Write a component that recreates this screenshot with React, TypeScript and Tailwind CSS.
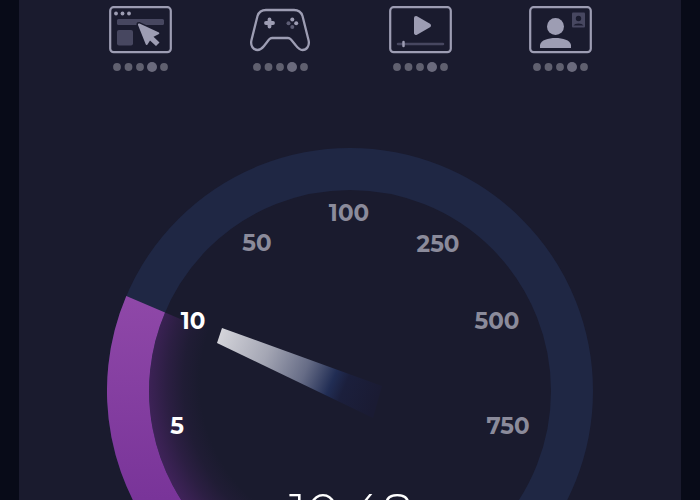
import type { ReactNode } from 'react';

const labels = [
  { text: '5', x: 70, y: 278, active: true },
  { text: '10', x: 86, y: 173, active: true },
  { text: '50', x: 150, y: 95, active: false },
  { text: '100', x: 242, y: 65, active: false },
  { text: '250', x: 331, y: 96, active: false },
  { text: '500', x: 390, y: 173, active: false },
  { text: '750', x: 401, y: 278, active: false },
];

function Frame() {
  return <rect x="2.2" y="2.2" width="60.6" height="45" rx="3.5" fill="none" stroke="#9d9db3" strokeWidth="2.2" />;
}

const activities: { name: string; icon: ReactNode }[] = [
  {
    name: 'Browsing',
    icon: (
      <>
        <Frame />
        <g fill="#9d9db3">
          <circle cx="8" cy="8.5" r="1.9" />
          <circle cx="14.5" cy="8.5" r="1.9" />
          <circle cx="21" cy="8.5" r="1.9" />
        </g>
        <rect x="9" y="14" width="47" height="6" rx="1.5" fill="#474760" />
        <rect x="9" y="25" width="16" height="15.5" rx="2" fill="#474760" />
        <path
          d="M31.5 18.5 L51 27.5 Q52 28.5 50.5 29.3 L45.5 31.8 L51.5 37.5 L48 41 L42 35.5 L39.5 39.5 Q38.3 40.7 37.7 39.3 L30 20 Q29.5 18 31.5 18.5 Z"
          fill="#9d9db3"
          stroke="#1a1b2e"
          strokeWidth="3"
          strokeLinejoin="round"
          paintOrder="stroke"
        />
      </>
    ),
  },
  {
    name: 'Gaming',
    icon: (
      <>
        <path
          d="M18 5 H46 Q52.5 5 54.5 11 L60.5 35 C62 41 58.5 45 54.5 45 C51 45 49 42 47.5 40 L43 34.5 Q41.5 33 40 33 H24 Q22.5 33 21 34.5 L16 41 C14 43.5 12 45 9.5 45 C5.5 45 2 41 3.5 35 L9.5 11 Q11.5 5 18 5 Z"
          fill="none"
          stroke="#9d9db3"
          strokeWidth="2.3"
        />
        <path d="M21.5 14.5 V21.5 M18 18 H25" stroke="#9d9db3" strokeWidth="3.8" strokeLinecap="round" />
        <circle cx="44.3" cy="14.5" r="2" fill="#9d9db3" />
        <circle cx="48.2" cy="18.3" r="2" fill="#9d9db3" />
        <circle cx="40.5" cy="18.3" r="2" fill="#5d5d75" />
        <circle cx="44.3" cy="22" r="2" fill="#5d5d75" />
      </>
    ),
  },
  {
    name: 'Streaming',
    icon: (
      <>
        <Frame />
        <path
          d="M28 13 L41 20.5 L28 28 Z"
          fill="#9d9db3"
          stroke="#9d9db3"
          strokeWidth="4"
          strokeLinejoin="round"
        />
        <path d="M10 39 H55" stroke="#474760" strokeWidth="2.5" strokeLinecap="round" />
        <path d="M15.5 37 V41" stroke="#9d9db3" strokeWidth="2.5" strokeLinecap="round" />
      </>
    ),
  },
  {
    name: 'Video chat',
    icon: (
      <>
        <Frame />
        <circle cx="27.5" cy="21.5" r="8.5" fill="#9d9db3" />
        <path d="M12 43 V40 C13 35 20 33 27.5 33 C35 33 42 35 43 40 V43 Z" fill="#9d9db3" />
        <rect x="44" y="7.5" width="13" height="15" rx="1" fill="#474760" />
        <circle cx="50.5" cy="13.5" r="2.7" fill="#1a1b2e" />
        <path d="M45.5 20.5 C47 17.7 54 17.7 55.5 20.5 Z" fill="#1a1b2e" />
      </>
    ),
  },
];

function Rating() {
  return (
    <svg viewBox="0 0 64 12" className="mt-1 h-3 w-16" fill="#60606f" aria-hidden="true">
      <circle cx="9" cy="6" r="3.9" />
      <circle cx="20.5" cy="6" r="3.9" />
      <circle cx="32" cy="6" r="3.9" />
      <circle cx="44" cy="6" r="5" fill="#6b6b7d" />
      <circle cx="56" cy="6" r="3.9" />
    </svg>
  );
}

function Gauge() {
  return (
    <svg
      viewBox="0 0 486 486"
      className="mx-auto mt-[75px] block w-full max-w-[486px] shrink-0 font-['Montserrat','Inter',sans-serif]"
      role="img"
      aria-label="Download speed"
    >
      <defs>
        <linearGradient id="progress" x1="0" y1="148" x2="0" y2="352" gradientUnits="userSpaceOnUse">
          <stop offset="0" stopColor="#8f48a8" />
          <stop offset="1" stopColor="#793499" />
        </linearGradient>
        <linearGradient id="needle" x1="112" y1="188" x2="268" y2="254" gradientUnits="userSpaceOnUse">
          <stop offset="0" stopColor="#d4d4da" />
          <stop offset="0.3" stopColor="#a4a6b4" />
          <stop offset="0.55" stopColor="#666c86" />
          <stop offset="0.72" stopColor="#212d54" />
          <stop offset="0.8" stopColor="#1b1f3c" />
          <stop offset="1" stopColor="#1a1b33" />
        </linearGradient>
        <radialGradient id="glow" cx="247" cy="235" r="208" gradientUnits="userSpaceOnUse">
          <stop offset="0.74" stopColor="#642a84" stopOpacity="0" />
          <stop offset="0.82" stopColor="#642a84" stopOpacity="0.08" />
          <stop offset="0.9" stopColor="#642a84" stopOpacity="0.24" />
          <stop offset="1" stopColor="#642a84" stopOpacity="0.5" />
        </radialGradient>
      </defs>

      {/* Glow inside the dial */}
      <path d="M243 243 L58 164.5 A201 201 0 0 0 243 444 Z" fill="url(#glow)" />

      {/* Track and progress */}
      <circle cx="243" cy="243" r="222" fill="none" stroke="#1f2744" strokeWidth="42" />
      <path
        d="M19.3 148 A243 243 0 0 0 71.2 414.8 L100.9 385.1 A201 201 0 0 1 58 164.5 Z"
        fill="url(#progress)"
      />

      {/* Needle */}
      <path d="M115 180 L275 238 L266 270 L110 195 Z" fill="url(#needle)" />

      {labels.map((label) => (
        <text
          key={label.text}
          x={label.x}
          y={label.y}
          dominantBaseline="central"
          textAnchor="middle"
          className={label.active ? 'fill-white text-[23px] font-bold' : 'fill-[#8b8b9b] text-[23px] font-bold'}
        >
          {label.text}
        </text>
      ))}
      <text x="244" y="381" textAnchor="middle" className="fill-white text-[50px] font-light">
        10.48
      </text>
    </svg>
  );
}

export default function App() {
  return (
    <div className="h-screen overflow-hidden bg-[#080b18] px-[19px]">
      <main className="flex h-full flex-col overflow-hidden bg-[#1a1b2e]">
        <ul className="mx-auto grid w-full max-w-[560px] shrink-0 grid-cols-4 pt-[5px]">
          {activities.map((activity) => (
            <li key={activity.name} className="flex flex-col items-center">
              <svg viewBox="0 0 64 52" className="h-[52px] w-16" role="img" aria-label={activity.name}>
                {activity.icon}
              </svg>
              <Rating />
            </li>
          ))}
        </ul>
        <Gauge />
      </main>
    </div>
  );
}
